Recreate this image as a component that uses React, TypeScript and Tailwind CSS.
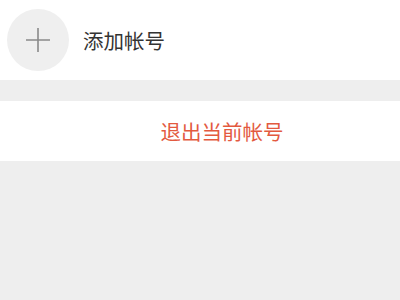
const font = { fontFamily: '"Noto Sans CJK SC", "Noto Sans", sans-serif' };

export default function App() {
  return (
    <div className="h-[300px] w-[400px] overflow-hidden bg-[#eeeeee]" style={font}>
      <div className="flex h-[80px] items-center bg-white pl-[7px]">
        <div className="flex h-[62px] w-[62px] items-center justify-center rounded-full bg-[#efefef]">
          <svg width="26" height="26" viewBox="0 0 26 26">
            <path d="M1 13h24M13 1v24" stroke="#8a8a8a" strokeWidth="1.6" />
          </svg>
        </div>
        <span className="ml-[14px] text-[20.5px] leading-none text-[#333333]">添加帐号</span>
      </div>
      <div className="mt-[21px] flex h-[60px] items-center justify-center bg-white">
        <span className="ml-[44px] text-[20.5px] leading-none text-[#e35a3f]">退出当前帐号</span>
      </div>
    </div>
  );
}
